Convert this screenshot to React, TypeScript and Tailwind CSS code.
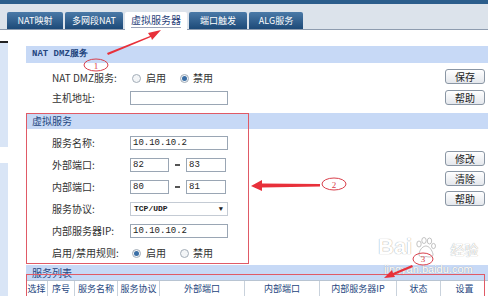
import React from 'react';

const tabs = [
    { label: 'NAT映射', w: 'w-[56px]' },
    { label: '多网段NAT', w: 'w-[58px]' },
    { label: '虚拟服务器', w: 'w-[62px]', active: true },
    { label: '端口触发', w: 'w-[58px]' },
    { label: 'ALG服务', w: 'w-[54px]' },
];

const columns = [
    { label: '选择', w: 'w-[22px]' },
    { label: '序号', w: 'w-[27px]' },
    { label: '服务名称', w: 'w-[43px]' },
    { label: '服务协议', w: 'w-[42px]' },
    { label: '外部端口', w: 'w-[85px]' },
    { label: '内部端口', w: 'w-[75px]' },
    { label: '内部服务器IP', w: 'w-[77px]' },
    { label: '状态', w: 'w-[44px]' },
    { label: '设置', w: 'flex-1' },
];

const Btn: React.FC<{ label: string }> = ({ label }) => (
    <div className="w-[40px] h-[15px] rounded-[3px] border border-[#8a96a4] bg-gradient-to-b from-white to-[#e4e7ec] flex items-center justify-center text-[10px] text-[#222] leading-none">
        {label}
    </div>
);

const Radio: React.FC<{ checked?: boolean }> = ({ checked }) => (
    <span className="w-[9px] h-[9px] rounded-full border border-[#a3adb8] bg-[#f3f5f7] flex items-center justify-center">
        {checked && <span className="w-[5px] h-[5px] rounded-full bg-[#3a6ea5]" />}
    </span>
);

const Input: React.FC<{ value?: string; w?: string }> = ({ value = '', w = 'w-[98px]' }) => (
    <div className={`${w} h-[14px] border border-[#9aa6b4] bg-white pl-[2px] flex items-center text-[9px] text-[#222] font-['Liberation_Mono',monospace] leading-none`}>
        {value}
    </div>
);

const Dash = () => <span className="w-[5px] h-[2px] bg-[#555] mx-[6px]" />;

const Row: React.FC<{ label: string; children: React.ReactNode }> = ({ label, children }) => (
    <div className="flex items-center h-[14px]">
        <div className="w-[78px] text-[10px] text-[#333] leading-none">{label}</div>
        <div className="flex items-center">{children}</div>
    </div>
);

const RadioPair: React.FC<{ on: boolean }> = ({ on }) => (
    <div className="flex items-center pl-[2px] text-[10px] text-[#333] leading-none">
        <Radio checked={on} />
        <span className="ml-[5px] mr-[14px]">启用</span>
        <Radio checked={!on} />
        <span className="ml-[4px]">禁用</span>
    </div>
);

const SectionHead: React.FC<{ label: string; mono?: boolean; h?: string }> = ({ label, mono, h = 'h-[16px]' }) => (
    <div className={`${h} bg-[#c7d9f6] pl-[6px] flex items-center text-[#24467e] leading-none ${mono ? "text-[9px] font-['Liberation_Mono',monospace] font-bold" : 'text-[10px]'}`}>
        {label}
    </div>
);

export default function App() {
    return (
        <div className="w-[488px] h-[296px] overflow-hidden relative bg-white font-['Noto_Sans_CJK_SC',sans-serif]">
            <div className="h-[4px] bg-[#2c5e8c]" />
            <div className="h-[26px] bg-[#dce3eb] border-b border-[#8e9caf] flex items-end pl-[7px] gap-[2px]">
                {tabs.map((t) => (
                    <div
                        key={t.label}
                        className={`${t.w} h-[17px] flex items-center justify-center leading-none rounded-t-[2px] ${
                            t.active
                                ? 'bg-white text-[#2a3f7a] text-[10px] -mb-px h-[18px]'
                                : 'bg-gradient-to-b from-[#4a7aa8] to-[#1d4a78] text-white text-[9px]'
                        }`}
                    >
                        <span className={t.active ? 'border-b border-[#9aa3b8] pb-[2px]' : ''}>{t.label}</span>
                    </div>
                ))}
            </div>

            <div className="flex">
                <div className="w-[8px] flex flex-col">
                    <div className="h-[11px]" />
                    <div className="h-[2px] bg-[#222]" />
                    <div className="h-[104px] bg-[#d9e5f6]" />
                    <div className="h-[16px]" />
                    <div className="h-[140px] bg-[#d9e5f6]" />
                </div>

                <div className="flex-1 pl-[18px] pt-[16px]">
                    <SectionHead label="NAT DMZ服务" mono h="h-[17px]" />
                    <div className="h-[50px] flex">
                        <div className="flex-1 pl-[26px] pt-[8px] flex flex-col gap-[6px]">
                            <Row label="NAT DMZ服务:">
                                <RadioPair on={false} />
                            </Row>
                            <Row label="主机地址:">
                                <Input />
                            </Row>
                        </div>
                        <div className="pr-[3px] pt-[6px] flex flex-col gap-[6px]">
                            <Btn label="保存" />
                            <Btn label="帮助" />
                        </div>
                    </div>

                    <SectionHead label="虚拟服务" />
                    <div className="h-[136px] flex">
                        <div className="flex-1 pl-[26px] pt-[7px] flex flex-col gap-[8px]">
                            <Row label="服务名称:">
                                <Input value="10.10.10.2" />
                            </Row>
                            <Row label="外部端口:">
                                <Input value="82" w="w-[39px]" />
                                <Dash />
                                <Input value="83" w="w-[40px]" />
                            </Row>
                            <Row label="内部端口:">
                                <Input value="80" w="w-[39px]" />
                                <Dash />
                                <Input value="81" w="w-[40px]" />
                            </Row>
                            <Row label="服务协议:">
                                <div className="w-[98px] h-[14px] border border-[#c4cbd4] bg-white pl-[3px] pr-[4px] flex items-center justify-between text-[8px] font-bold text-[#222] font-['Liberation_Mono',monospace] leading-none">
                                    <span>TCP/UDP</span>
                                    <span className="text-[7px]">▼</span>
                                </div>
                            </Row>
                            <Row label="内部服务器IP:">
                                <Input value="10.10.10.2" />
                            </Row>
                            <Row label="启用/禁用规则:">
                                <RadioPair on />
                            </Row>
                        </div>
                        <div className="pr-[3px] pt-[22px] flex flex-col gap-[5px]">
                            <Btn label="修改" />
                            <Btn label="清除" />
                            <Btn label="帮助" />
                        </div>
                    </div>

                    <SectionHead label="服务列表" h="h-[15px]" />
                    <div className="flex h-[16px] border-t border-[#b8c4d2] text-[9px] text-[#24467e] leading-none">
                        {columns.map((c, i) => (
                            <div
                                key={c.label}
                                className={`${c.w} flex items-center justify-center ${i < columns.length - 1 ? 'border-r border-[#c9d2dc]' : ''}`}
                            >
                                {c.label}
                            </div>
                        ))}
                    </div>
                </div>
            </div>

            {/* baidu watermark */}
            <div className="absolute left-[378px] top-[236px] flex flex-col items-start text-white leading-none pointer-events-none [text-shadow:0_0_1px_#8a8a8a]">
                <div className="flex items-end">
                    <span className="text-[22px] font-bold font-['Liberation_Sans',sans-serif]">Bai</span>
                    <svg width="24" height="22" viewBox="0 0 24 22" className="mx-[1px]">
                        <g fill="#fff" stroke="#9a9a9a" strokeWidth="0.6">
                            <ellipse cx="6" cy="8" rx="2.2" ry="3" />
                            <ellipse cx="11" cy="4.5" rx="2.2" ry="3" />
                            <ellipse cx="16.5" cy="5" rx="2.2" ry="3" />
                            <ellipse cx="20.5" cy="10" rx="2" ry="2.6" />
                            <path d="M6 18 C7 12 11 10 13 10 C16 10 19 14 20 18 C20.5 21 17 21.5 13 20.5 C9 21.5 5.5 21 6 18 Z" />
                        </g>
                    </svg>
                    <span className="text-[14px] pl-[12px] pb-[2px]">经验</span>
                </div>
                <span className="mt-[6px] ml-[6px] text-[11px] font-['Liberation_Sans',sans-serif]">jingyan.baidu.com</span>
            </div>

            <svg className="absolute inset-0 pointer-events-none" width="488" height="296" viewBox="0 0 488 296">
                <rect x="26.5" y="113.5" width="222" height="150" fill="none" stroke="#e05a66" strokeWidth="1" />
                <rect x="26.5" y="274.5" width="458" height="30" fill="none" stroke="#e05a66" strokeWidth="1" />

                <ellipse cx="96" cy="65" rx="12" ry="6" fill="none" stroke="#d9404c" strokeWidth="1" />
                <text x="96" y="68.5" textAnchor="middle" fontSize="9" fill="#d9404c" fontFamily="Liberation Serif, serif">1</text>
                <path d="M107 53 L150 36 L148 33 L161 30 L152 40 L151 37 L108 55 Z" fill="#e8303a" />

                <ellipse cx="334" cy="184" rx="12" ry="6" fill="none" stroke="#d9404c" strokeWidth="1" />
                <text x="334" y="187.5" textAnchor="middle" fontSize="9" fill="#d9404c" fontFamily="Liberation Serif, serif">2</text>
                <path d="M320 184 L262 183.5 L262 180 L251 186 L262 191 L262 187.5 L320 186.5 Z" fill="#e8303a" />

                <ellipse cx="423" cy="259" rx="10" ry="6" fill="none" stroke="#d9404c" strokeWidth="1" />
                <text x="423" y="262" textAnchor="middle" fontSize="9" fill="#d9404c" fontFamily="Liberation Serif, serif">3</text>
                <path d="M412 265 L393 273 L392 270 L384 278 L395 277 L394 275 L413 267 Z" fill="#e8303a" />
            </svg>
        </div>
    );
}
